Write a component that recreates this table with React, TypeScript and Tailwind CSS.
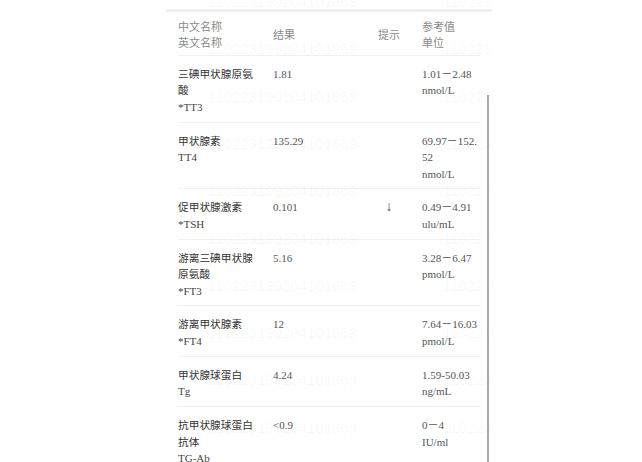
import React from "react";

type Row = {
  name: string[];
  en: string;
  result: string;
  hint?: string;
  ref: string[];
};

const rows: Row[] = [
  { name: ["三碘甲状腺原氨", "酸"], en: "*TT3", result: "1.81", ref: ["1.01－2.48", "nmol/L"] },
  { name: ["甲状腺素"], en: "TT4", result: "135.29", ref: ["69.97－152.", "52", "nmol/L"] },
  { name: ["促甲状腺激素"], en: "*TSH", result: "0.101", hint: "↓", ref: ["0.49－4.91", "ulu/mL"] },
  { name: ["游离三碘甲状腺", "原氨酸"], en: "*FT3", result: "5.16", ref: ["3.28－6.47", "pmol/L"] },
  { name: ["游离甲状腺素"], en: "*FT4", result: "12", ref: ["7.64－16.03", "pmol/L"] },
  { name: ["甲状腺球蛋白"], en: "Tg", result: "4.24", ref: ["1.59-50.03", "ng/mL"] },
  { name: ["抗甲状腺球蛋白", "抗体"], en: "TG-Ab", result: "<0.9", ref: ["0－4", "IU/ml"] },
];

const cjk = "font-['Noto_Sans_CJK_SC',sans-serif]";
const serif = "font-['Liberation_Serif','Noto_Sans_CJK_SC',serif]";

const marks = Array.from({ length: 10 }, (_, i) => i);

export default function App() {
  return (
    <div className="h-[462px] overflow-hidden bg-white">
      <div className="relative ml-[166px] w-[326px] h-full">
        <div className="h-[9px]" />
        <div className="h-[3px] bg-[#efefef]" />

        <div className="px-[12px]">
          <div className={`grid grid-cols-[95px_105px_44px_58px] items-center h-[44px] border-b border-[#f1f1f1] text-[11px] leading-[16px] text-[#8a8a8a] ${cjk}`}>
            <div>
              <div>中文名称</div>
              <div>英文名称</div>
            </div>
            <div>结果</div>
            <div>提示</div>
            <div>
              <div>参考值</div>
              <div>单位</div>
            </div>
          </div>

          {rows.map((r) => (
            <div
              key={r.en}
              className="grid grid-cols-[95px_105px_44px_58px] items-start pt-[10px] pb-[6.5px] border-b border-[#f1f1f1] leading-[16.4px]"
            >
              <div>
                {r.name.map((n) => (
                  <div key={n} className={`text-[10.7px] text-[#333] ${cjk}`}>
                    {n}
                  </div>
                ))}
                <div className={`text-[11px] text-[#444] ${serif}`}>{r.en}</div>
              </div>
              <div className={`text-[11px] text-[#555] ${serif}`}>{r.result}</div>
              <div className={`w-[22px] text-center text-[14px] text-[#555] ${serif}`}>{r.hint}</div>
              <div className={`text-[11px] text-[#555] whitespace-nowrap ${serif}`}>
                {r.ref.map((t) => (
                  <div key={t}>{t}</div>
                ))}
              </div>
            </div>
          ))}
        </div>

        {/* watermark */}
        <div className="pointer-events-none absolute inset-0 overflow-hidden font-['Liberation_Sans',sans-serif] text-[15px] leading-[16px] text-[rgba(0,0,0,0.035)]">
          {marks.map((i) =>
            [42, 277].map((x) => (
              <div
                key={`${i}-${x}`}
                className="absolute whitespace-nowrap"
                style={{ left: x, top: i * 47.3 - 6 }}
              >
                110223199204101869
              </div>
            ))
          )}
        </div>

        {/* scroll indicator */}
        <div className="absolute left-[321px] top-[95px] bottom-0 w-[2px] bg-[#a9a9a9]" />
      </div>
    </div>
  );
}
